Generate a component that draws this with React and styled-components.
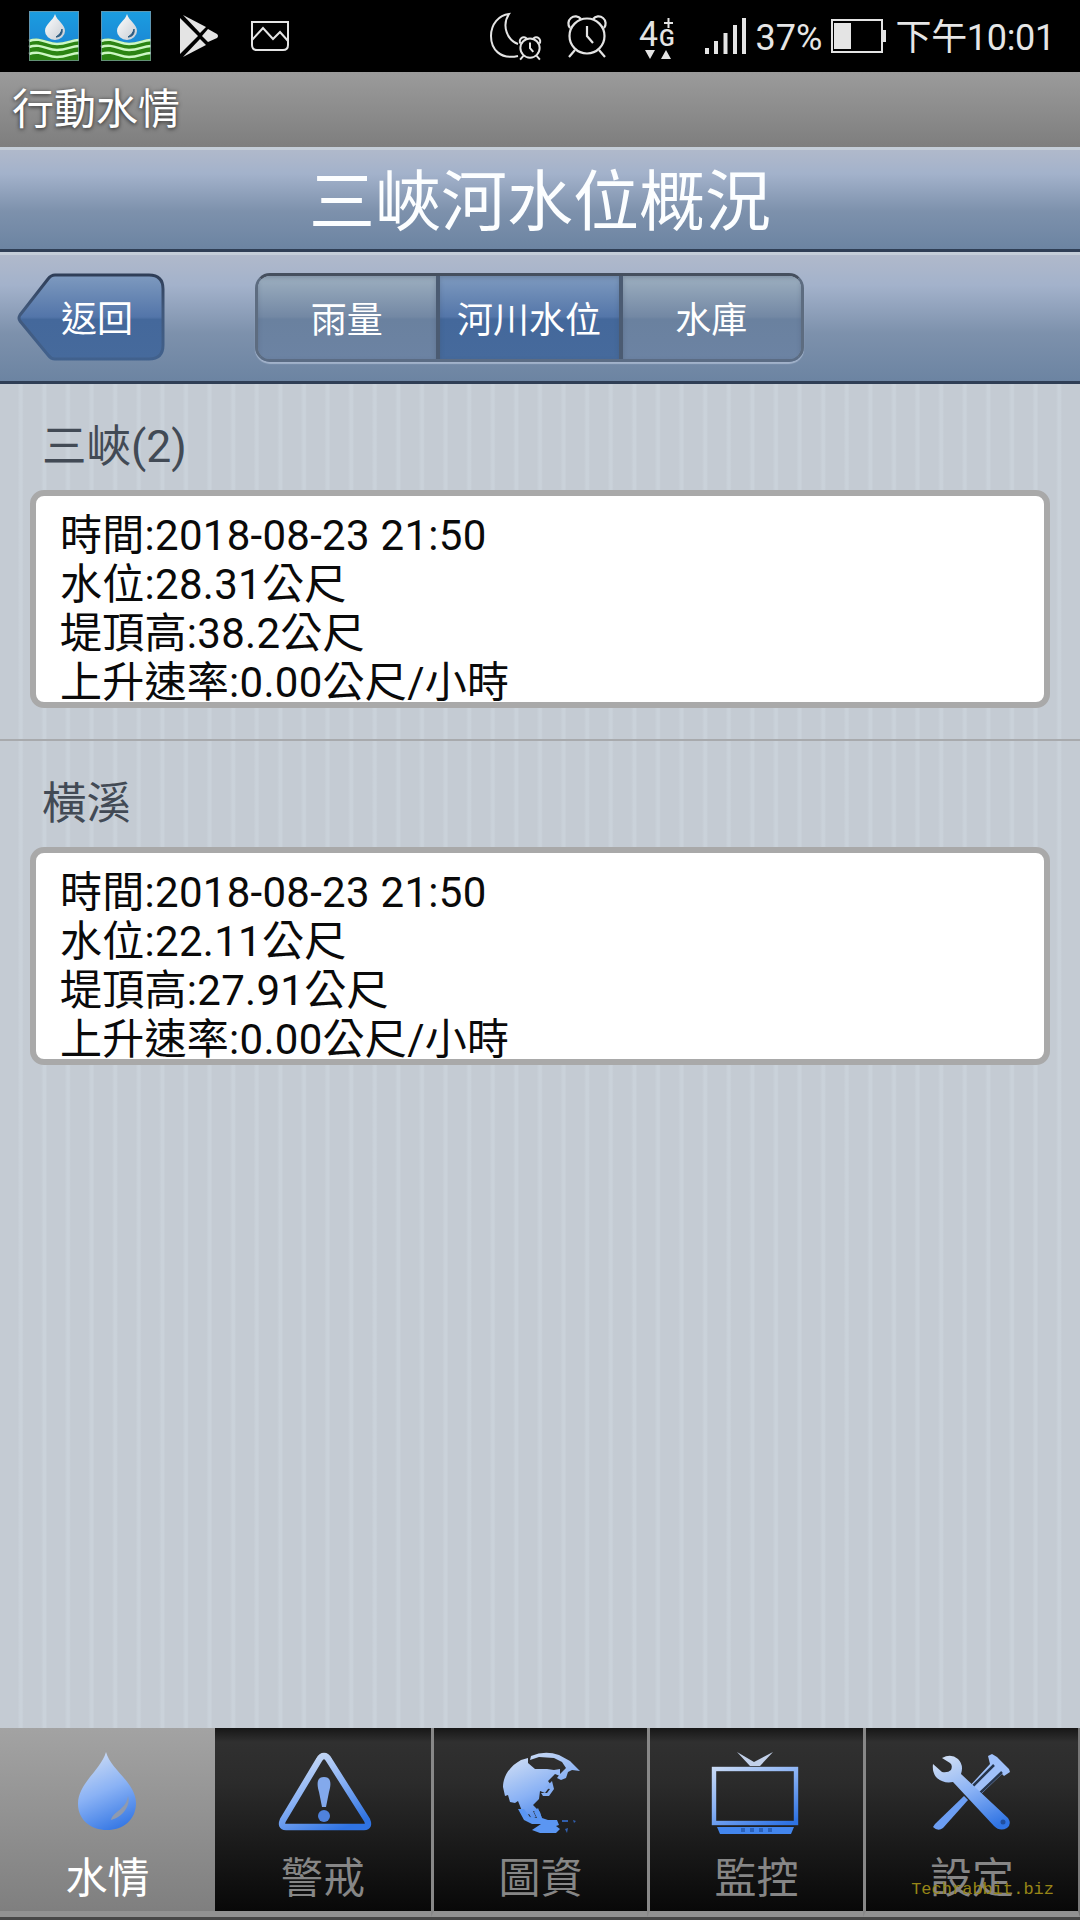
import React from "react";
import styled, { createGlobalStyle } from "styled-components";

const GlobalStyle = createGlobalStyle`
  * {
    box-sizing: border-box;
  }

  body {
    margin: 0;
    background: #c5ccd4;
    font-family: Roboto, "Noto Sans CJK TC", sans-serif;
  }
`;

const Screen = styled.div`
  width: 1080px;
  height: 1920px;
  display: flex;
  flex-direction: column;
  overflow: hidden;
  position: relative;
`;

const StatusBar = styled.div`
  height: 72px;
  flex-shrink: 0;
  display: flex;
  justify-content: space-between;
  background: #000;
  color: #e6e6e6;
`;

const StatusIcons = styled.div`
  display: flex;
  align-items: center;
  gap: ${(props) => props.$gap || 0}px;
  padding-left: ${(props) => props.$left || 0}px;
  padding-right: ${(props) => props.$right || 0}px;
`;

const StatusText = styled.span`
  font-size: 36px;
  line-height: 72px;
  padding-top: 4px;
  white-space: nowrap;
  letter-spacing: ${(props) => props.$spacing || 0}px;
  margin-left: ${(props) => props.$left || 0}px;
`;

const StatusSvg = styled.svg`
  display: block;
  flex-shrink: 0;
  overflow: visible;
  margin-left: ${(props) => props.$left || 0}px;
`;

const AppBar = styled.div`
  height: 75px;
  flex-shrink: 0;
  padding-left: 12px;
  background: linear-gradient(#9b9b9b, #7e7e7e);
  color: #fff;
  font-size: 42px;
  line-height: 75px;
  text-shadow: 0 1px 4px rgba(0, 0, 0, 0.75);
`;

const BlueBar = styled.div`
  flex-shrink: 0;
  height: ${(props) => props.$height}px;
  display: flex;
  align-items: flex-start;
  background: linear-gradient(#b0b9cb 0%, #a3b2cb 24%, #7d91ac 62%, #6c84a2 100%);
  border-top: 3px solid #c4cdd8;
  border-bottom: 3px solid #2f3e55;
`;

const PageTitle = styled.h1`
  width: 100%;
  margin: 0;
  padding-top: 4px;
  text-align: center;
  color: #fcfeff;
  font-size: 66px;
  font-weight: 400;
  line-height: 97px;
`;

const BackButton = styled.button`
  width: 148px;
  height: 88px;
  margin: 18px 0 0 17px;
  padding: 0;
  border: none;
  background: none;
  color: #fff;
  display: grid;
  font: inherit;
  font-size: 36px;

  > * {
    grid-area: 1 / 1;
  }
`;

const BackLabel = styled.span`
  padding-left: 44px;
  text-align: left;
  line-height: 94px;
`;

const Segments = styled.div`
  width: 549px;
  height: 89px;
  margin: 18px 0 0 90px;
  display: flex;
  border: 3px solid #5d6c80;
  border-top-color: #454f5e;
  border-bottom-color: #5b6c84;
  border-radius: 15px;
  box-shadow: 0 2px 1px rgba(174, 189, 211, 0.8);
  overflow: hidden;
`;

const Segment = styled.button`
  flex: 1;
  padding: 6px 1px 0 0;
  border: none;
  border-left: ${(props) => (props.$first ? "none" : "4px solid #4b5b72")};
  background: ${(props) =>
    props.$active
      ? "linear-gradient(#7e9abf 0%, #5476a9 49%, #44689b 52%, #466a9c 100%)"
      : "linear-gradient(#9dafc0 0%, #7388a4 49%, #6a819f 52%, #6c83a3 100%)"};
  box-shadow: inset 0 2px 4px rgba(60, 75, 95, 0.3);
  color: #fff;
  font: inherit;
  font-size: 36px;
  line-height: 76px;
  white-space: nowrap;
`;

const Content = styled.main`
  flex: 1;
  background: repeating-linear-gradient(
    90deg,
    #c4cbd3 0,
    #c4cbd3 17.5px,
    #cad2da 20px,
    #cad2da 22px,
    #c4cbd3 23.6px
  );
`;

const Station = styled.section`
  height: 357px;
  padding: 0 30px;
  border-bottom: ${(props) => (props.$last ? "none" : "2px solid #a8aaad")};
`;

const StationName = styled.h2`
  height: 106px;
  margin: 0;
  padding-left: 12px;
  color: #424a55;
  font-size: 44.5px;
  font-weight: 400;
  line-height: 126px;
`;

const Card = styled.div`
  height: 218px;
  padding: 15px 24px 0;
  border: 6px solid #a9a9a9;
  border-radius: 14px;
  background: #fff;
  color: #0a0a0a;
  font-size: 42px;
  line-height: 49px;
  letter-spacing: 0.28px;
  overflow: hidden;
`;

const Line = styled.div`
  height: 49px;
  white-space: nowrap;
`;

const TabBar = styled.nav`
  height: 192px;
  flex-shrink: 0;
  display: flex;
  background: #484848;
`;

const Tab = styled.div`
  width: 216px;
  height: 189px;
  flex-shrink: 0;
  display: flex;
  flex-direction: column;
  align-items: center;
  background: ${(props) =>
    props.$active
      ? "linear-gradient(#a3a3a3, #7f7f7f)"
      : "linear-gradient(#171717 0, #303030 14px, #2b2b2b 30%, #080808 100%)"};
  border-left: ${(props) => (props.$divider ? "3px solid #888" : "none")};
  border-bottom: 6px solid #929292;
  color: ${(props) => (props.$active ? "#fff" : "#868686")};
  font-size: 42px;

  &:first-child {
    width: 215px;
  }

  &:last-child {
    width: 217px;
    border-right: 2px solid #777;
  }
`;

const TabIcon = styled.svg`
  display: block;
  width: 100px;
  height: 100px;
  margin: 10px 1px 0 0;
  flex-shrink: 0;
`;

const TabLabel = styled.span`
  height: 60px;
  line-height: 82px;
`;

const Watermark = styled.span`
  position: absolute;
  right: 26px;
  bottom: 20px;
  color: #978517;
  font-family: "Liberation Mono", monospace;
  font-size: 17px;
  line-height: 20px;
`;

const AppBadge = () => (
  <StatusSvg width="50" height="50" viewBox="0 0 50 50">
    <defs>
      <linearGradient id="sky" x1="0" y1="0" x2="0" y2="1">
        <stop offset="0" stopColor="#1b9de0" />
        <stop offset="1" stopColor="#1b7fd0" />
      </linearGradient>
      <linearGradient id="badgeDrop" x1="0" y1="0" x2="1" y2="1">
        <stop offset="0" stopColor="#fff" />
        <stop offset="1" stopColor="#c5cbd2" />
      </linearGradient>
    </defs>
    <rect width="50" height="50" fill="url(#sky)" />
    <path d="M0 29C12 25 18 32 28 32S42 28 50 28V50H0Z" fill="#2b8413" />
    <g fill="none" stroke="#cdf7c4" strokeWidth="2.4">
      <path d="M0 30C12 26 18 33 28 33S42 29 50 29" />
      <path d="M0 36C12 32 18 39 28 39S42 35 50 35" />
      <path d="M0 43C12 39 18 46 28 46S42 42 50 42" />
    </g>
    <path d="M26 3C24 10 16 13 16 20A10 9 0 0 0 36 20C36 13 28 10 26 3Z" fill="url(#badgeDrop)" />
    <path d="M33 18C34 23 31 26 27 26C30 24 32 22 33 18Z" fill="#2a5a80" stroke="#2a5a80" />
    <rect x="0.5" y="0.5" width="49" height="49" fill="none" stroke="#7a95a0" opacity="0.7" />
  </StatusSvg>
);

const PlayIcon = () => (
  <StatusSvg width="40" height="44" viewBox="0 0 40 44" $left={6}>
    <g fill="#e4e4e4">
      <path d="M1 4V40L19 22Z" />
      <path d="M4 1L27 13L21 19Z" />
      <path d="M4 43L27 31L21 25Z" />
      <path d="M29 15L38 20Q40 22 38 24L29 28L23 22Z" />
    </g>
  </StatusSvg>
);

const PictureIcon = () => (
  <StatusSvg width="40" height="32" viewBox="0 0 40 32" $left={9}>
    <g fill="none" stroke="#e4e4e4" strokeWidth="2">
      <path d="M2 2H38V25Q38 30 33 30H7Q2 30 2 25Z" />
      <path d="M2 20L13 8L23 19L30 12L38 21" />
    </g>
  </StatusSvg>
);

const ClockShape = () => (
  <>
    <circle cx="20" cy="22" r="17.5" />
    <path d="M20 12V22L26 29M8 36L2 43M32 36L38 43" />
    <path d="M3 14A7 7 0 1 1 14 5M26 5A7 7 0 1 1 37 14" />
  </>
);

const MoonIcon = () => (
  <StatusSvg width="52" height="58" viewBox="0 0 52 58">
    <g fill="none" stroke="#e4e4e4" strokeWidth="2">
      <path d="M28 49C10 53 1 42 1 29C1 17 9 8 19 7C11 19 18 34 28 37" />
      <g transform="translate(29 29) scale(.55)" strokeWidth="3.6">
        <ClockShape />
      </g>
    </g>
  </StatusSvg>
);

const AlarmIcon = () => (
  <StatusSvg width="40" height="44" viewBox="0 0 40 44" $left={25}>
    <g fill="none" stroke="#e4e4e4" strokeWidth="2.2">
      <ClockShape />
    </g>
  </StatusSvg>
);

const NetworkIcon = () => (
  <StatusSvg width="38" height="48" viewBox="0 0 38 48" $left={32} fill="#e4e4e4">
    <text x="0" y="33.5" fontFamily="Roboto" fontSize="35" textLength="19" lengthAdjust="spacingAndGlyphs">4</text>
    <text x="20" y="33.5" fontFamily="Roboto" fontWeight="500" fontSize="23">G</text>
    <path d="M25 11H34M29.5 6V16" stroke="#e4e4e4" strokeWidth="2" />
    <path d="M6 38H16L11 47ZM22 47H32L27 38Z" />
  </StatusSvg>
);

const SignalIcon = () => (
  <StatusSvg width="42" height="36" viewBox="0 0 42 36" $left={28} fill="#e4e4e4">
    <rect x="0" y="30" width="4" height="6" />
    <rect x="9" y="23" width="4" height="13" />
    <rect x="18.5" y="15" width="4" height="21" />
    <rect x="28" y="7" width="4" height="29" />
    <rect x="37" y="0" width="4" height="36" />
  </StatusSvg>
);

const BatteryIcon = () => (
  <StatusSvg width="55" height="34" viewBox="0 0 55 34" $left={9}>
    <rect x="1" y="1" width="50" height="32" fill="none" stroke="#e4e4e4" strokeWidth="2" />
    <rect x="3" y="4" width="17" height="26" fill="#e4e4e4" />
    <rect x="51" y="11" width="4" height="12" fill="#e4e4e4" />
  </StatusSvg>
);

const BackShape = () => (
  <svg width="148" height="90" viewBox="0 0 148 90">
    <defs>
      <linearGradient id="back" x1="0" y1="0" x2="0" y2="1">
        <stop offset="0" stopColor="#7e9abf" />
        <stop offset="0.5" stopColor="#5375a9" />
        <stop offset="0.53" stopColor="#44689b" />
        <stop offset="1" stopColor="#466a9c" />
      </linearGradient>
      <linearGradient id="backEdge" x1="0" y1="0" x2="0" y2="1">
        <stop offset="0" stopColor="#2f3e58" />
        <stop offset="0.4" stopColor="#405779" />
        <stop offset="1" stopColor="#41618d" />
      </linearGradient>
    </defs>
    <path
      d="M38 2H132Q146 2 146 16V72Q146 86 132 86H38Q34 86 31 82L3 48Q1 45 3 42L31 6Q34 2 38 2Z"
      fill="url(#back)"
      stroke="url(#backEdge)"
      strokeWidth="3"
    />
  </svg>
);

const DropIcon = () => (
  <>
    <path d="M49 14C44 32 21 45 21 66C21 82 34 92 50 92S79 82 79 65C79 45 54 32 49 14Z" fill="url(#ice)" />
    <path d="M71 58C74 67 66 79 54 82C56 73 69 72 71 58Z" fill="#8f9aae" />
  </>
);

const WarningIcon = () => (
  <>
    <path d="M51 18Q54 18 56 22L94 82Q97 89 91 89H13Q7 89 10 82L46 22Q48 18 51 18Z" fill="none" stroke="url(#ice)" strokeWidth="6.4" />
    <path d="M51 39C59 39 58 47 56 54L53 69H49L46 54C44 47 43 39 51 39Z" fill="#83a9ec" />
    <circle cx="51" cy="78" r="6" fill="#4f82dc" />
  </>
);

const GlobeIcon = () => (
  <>
    <path
      d="M38 20L31 22C20 28 13 38 13 49L15 58L18 57L20 64L25 65L28 63L32 73L36 78L39 76L42 81L46 79L43 73L47 74L52 81L50 74L43 67L49 61L50 53L55 55L61 47L58 43L65 36L70 38L70 31L64 32L57 31L45 31L38 25Z"
      fill="url(#ice)"
    />
    <path d="M55 50L62 43L64 51L59 58L53 58L51 55L57 55L60 51Z" fill="#85aef2" />
    <path d="M41 18Q55 12 69 17L80 23L90 33L82 32L78 34L76 40L71 42L67 40L70 36L76 30L72 24L64 20L49 19L40 22Z" fill="url(#ice)" />
    <path d="M28 71L34 71L40 79L47 80L44 74L48 70L52 80L58 82L67 82L69 87L66 88L70 91L66 95H50L42 92L48 88L51 86L42 86L34 82Z" fill="#5b96f2" />
    <path d="M72 82L78 82V84H72ZM75 91L78 90L77 95ZM83 82L86 83L84 85Z" fill="#315fae" />
  </>
);

const TvIcon = () => (
  <>
    <path d="M31 14L48 24L67 14L54 28H44Z" fill="#c3d1ea" />
    <rect x="8" y="31" width="82" height="54" fill="none" stroke="url(#ice)" strokeWidth="4.4" />
    <path d="M11 89H88L85 96H14Z" fill="#4386ee" />
    <path d="M35 92H66" stroke="#2b62bb" strokeWidth="4" strokeDasharray="4 5" />
  </>
);

const ToolsIcon = () => (
  <>
    <path d="M13 86L42 58L46 62L21 90Q16 94 11 89Z" fill="#6c9ef3" />
    <path d="M66 18L70 16L75 19L87 31L88 34L82 38L80 36L55 60L45 51L68 26Z" fill="#9fc0fa" />
    <path d="M72 27L51 48M80 34L58 55" stroke="#26354d" strokeWidth="2.5" />
    <path d="M20 20Q29 15 36 21Q42 27 39 36L86 80Q90 86 85 90Q78 94 72 88L31 44Q21 46 14 39Q10 34 11 26L20 34Q26 35 29 32Q31 27 28 25Z" fill="url(#ice)" />
    <circle cx="81" cy="84" r="2.5" fill="#204e9d" />
  </>
);

const stations = [
  {
    name: "三峽(2)",
    lines: ["時間:2018-08-23 21:50", "水位:28.31公尺", "堤頂高:38.2公尺", "上升速率:0.00公尺/小時"],
  },
  {
    name: "橫溪",
    lines: ["時間:2018-08-23 21:50", "水位:22.11公尺", "堤頂高:27.91公尺", "上升速率:0.00公尺/小時"],
  },
];

const segments = ["雨量", "河川水位", "水庫"];

const tabs = [
  { label: "水情", Icon: DropIcon },
  { label: "警戒", Icon: WarningIcon },
  { label: "圖資", Icon: GlobeIcon },
  { label: "監控", Icon: TvIcon },
  { label: "設定", Icon: ToolsIcon },
];

function App() {
  return (
    <Screen>
      <GlobalStyle />
      <StatusBar>
        <StatusIcons $gap={22} $left={29}>
          <AppBadge />
          <AppBadge />
          <PlayIcon />
          <PictureIcon />
        </StatusIcons>
        <StatusIcons $right={25}>
          <MoonIcon />
          <AlarmIcon />
          <NetworkIcon />
          <SignalIcon />
          <StatusText $left={9}>37%</StatusText>
          <BatteryIcon />
          <StatusText $left={9} $spacing={-0.3}>
            下午10:01
          </StatusText>
        </StatusIcons>
      </StatusBar>
      <AppBar>行動水情</AppBar>
      <BlueBar $height={105}>
        <PageTitle>三峽河水位概況</PageTitle>
      </BlueBar>
      <BlueBar $height={132}>
        <BackButton>
          <BackShape />
          <BackLabel>返回</BackLabel>
        </BackButton>
        <Segments>
          {segments.map((text, i) => (
            <Segment key={text} $first={i === 0} $active={i === 1}>
              {text}
            </Segment>
          ))}
        </Segments>
      </BlueBar>
      <Content>
        {stations.map((station, i) => (
          <Station key={station.name} $last={i === stations.length - 1}>
            <StationName>{station.name}</StationName>
            <Card>
              {station.lines.map((line) => (
                <Line key={line}>{line}</Line>
              ))}
            </Card>
          </Station>
        ))}
      </Content>
      <TabBar>
        {tabs.map(({ label, Icon }, i) => (
          <Tab key={label} $active={i === 0} $divider={i > 1}>
            <TabIcon viewBox="0 0 100 100">
              <defs>
                <linearGradient id="ice" gradientUnits="userSpaceOnUse" x1="25" y1="15" x2="60" y2="95">
                  <stop offset="0" stopColor="#d3e0f4" />
                  <stop offset="0.5" stopColor="#8ab2f5" />
                  <stop offset="1" stopColor="#2f73e3" />
                </linearGradient>
              </defs>
              <Icon />
            </TabIcon>
            <TabLabel>{label}</TabLabel>
          </Tab>
        ))}
      </TabBar>
      <Watermark>Techrabbit.biz</Watermark>
    </Screen>
  );
}

export default App;
